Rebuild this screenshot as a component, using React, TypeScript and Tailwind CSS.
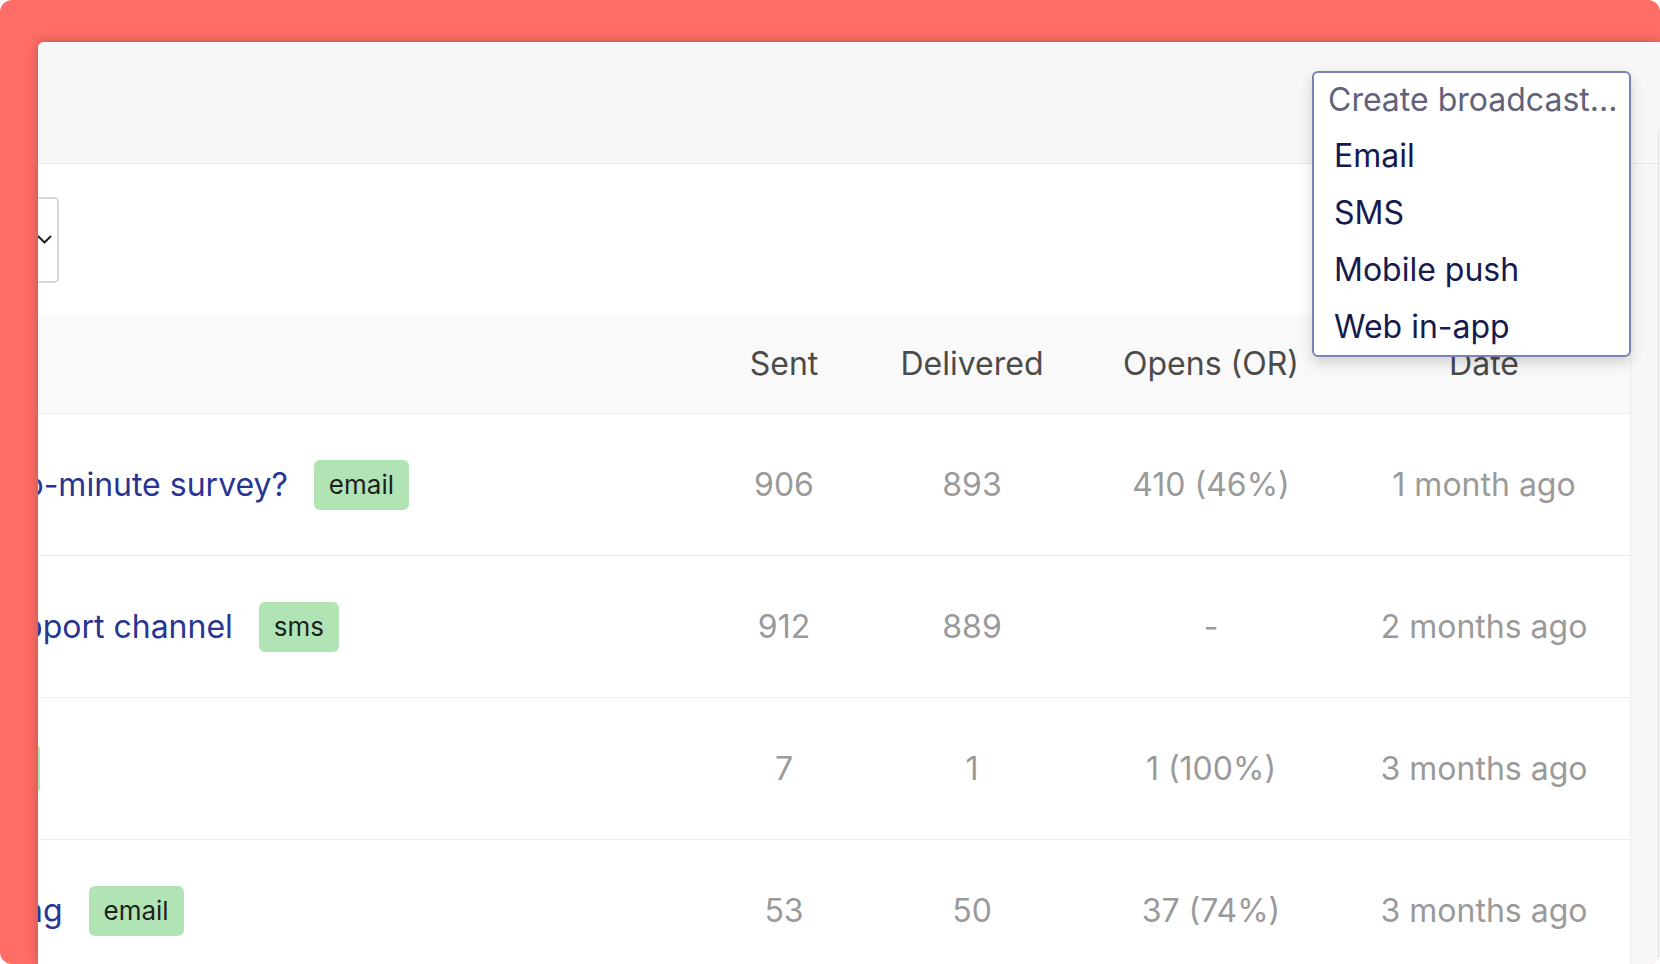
type Broadcast = {
  title: string;
  tag: string;
  sent: string;
  delivered: string;
  opens: string;
  date: string;
};

const broadcasts: Broadcast[] = [
  { title: "Would you take a two-minute survey?", tag: "email", sent: "906", delivered: "893", opens: "410 (46%)", date: "1 month ago" },
  { title: "Introducing a live support channel", tag: "sms", sent: "912", delivered: "889", opens: "-", date: "2 months ago" },
  { title: "Test Updates", tag: "email", sent: "7", delivered: "1", opens: "1 (100%)", date: "3 months ago" },
  { title: "Mobile API onboarding", tag: "email", sent: "53", delivered: "50", opens: "37 (74%)", date: "3 months ago" },
];

const channels = ["Email", "SMS", "Mobile push", "Web in-app"];

export default function App() {
  return (
    <div className="h-[964px] w-[1660px] bg-white font-[family-name:Inter,sans-serif]">
      <div className="h-full w-full overflow-hidden rounded-[12px] bg-[#ff6e66] pl-[38px] pt-[42px]">
        {/* App panel */}
        <div className="relative flex h-full flex-col rounded-tl-[6px] bg-white shadow-[0_0_14px_rgba(0,0,0,0.25)]">
          {/* Header */}
          <header className="flex h-[122px] shrink-0 justify-end rounded-tl-[6px] border-b border-[#e6e6e6] bg-[#f7f7f7]">
            <div className="mt-[90px] w-[2px] border-l border-[#e2e2e2]" />
          </header>

          <div className="flex min-h-0 flex-1">
            {/* Main content, scrolled to the right */}
            <main className="min-w-0 flex-1 overflow-hidden border-r border-[#ececec]">
              <div className="-ml-[359px]">
                {/* Filter */}
                <div className="flex h-[151px] items-center pl-[40px]">
                  <div className="flex h-[86px] w-[340px] items-center justify-end rounded-[5px] border-2 border-[#d6d6d6] pr-[5px]">
                    <svg width="15" height="9" viewBox="0 0 15 9" fill="none" stroke="#222" strokeWidth="2" strokeLinecap="round" strokeLinejoin="round">
                      <path d="M1.5 1.5l6 6 6-6" />
                    </svg>
                  </div>
                </div>

                {/* Table */}
                <div className="text-[32px]">
                  <div className="flex h-[99px] items-center border-b border-[#ececec] bg-[#f9f9f9] text-[#4b4b4b]">
                    <div className="flex-1" />
                    <div className="w-[152px] text-center">Sent</div>
                    <div className="w-[224px] text-center">Delivered</div>
                    <div className="w-[254px] text-center">Opens (OR)</div>
                    <div className="w-[292px] text-center">Date</div>
                  </div>

                  {broadcasts.map((b) => (
                    <div key={b.title} className="flex h-[142px] items-center border-b border-[#ececec]">
                      <div className="flex flex-1 items-center gap-[26px] pl-[40px]">
                        <a className="whitespace-nowrap text-[#283593]">{b.title}</a>
                        <span className="rounded-[6px] bg-[#b0e4b4] px-[15px] py-[7px] text-[26px] leading-[36px] text-[#1f1f1f]">
                          {b.tag}
                        </span>
                      </div>
                      <div className="w-[152px] text-center text-[#9a9a9a]">{b.sent}</div>
                      <div className="w-[224px] text-center text-[#9a9a9a]">{b.delivered}</div>
                      <div className="w-[254px] text-center text-[#9a9a9a]">{b.opens}</div>
                      <div className="w-[292px] text-center text-[#9a9a9a]">{b.date}</div>
                    </div>
                  ))}
                </div>
              </div>
            </main>

            {/* Right strip */}
            <aside className="flex w-[29px] shrink-0 justify-end bg-[#f7f7f7]">
              <div className="h-full w-[2px] border-l border-[#e2e2e2]" />
            </aside>
          </div>

          {/* Create broadcast menu */}
          <div className="absolute left-[1274px] top-[29px] w-[319px] rounded-[6px] border-2 border-[#7b82b6] bg-white text-[32px] shadow-[0_6px_14px_rgba(0,0,0,0.16)]">
            <div className="flex h-[54px] items-center pl-[14px] text-[#62627a]">Create broadcast...</div>
            {channels.map((c) => (
              <div key={c} className="flex h-[57px] items-center pl-[20px] text-[#161a4f]">
                {c}
              </div>
            ))}
          </div>
        </div>
      </div>
    </div>
  );
}
